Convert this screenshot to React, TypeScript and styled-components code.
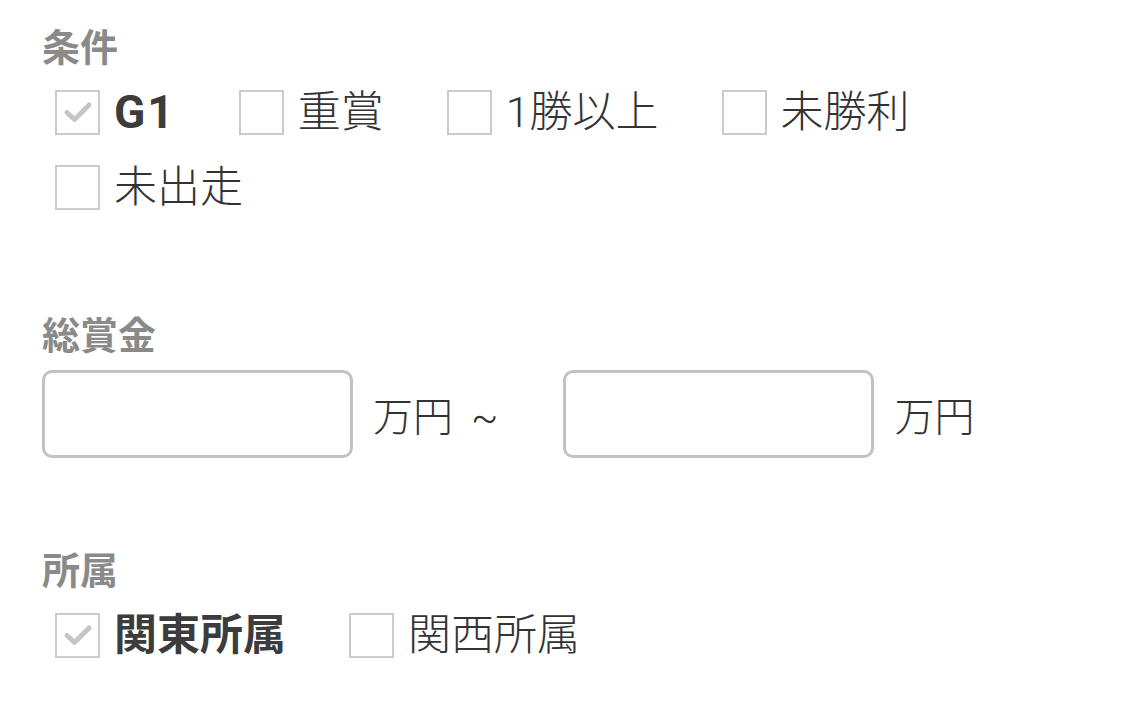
import React, { useState } from "react";
import styled, { createGlobalStyle } from "styled-components";

const GlobalStyle = createGlobalStyle`
    body {
        margin: 0;
        background: #ffffff;
        font-family: "Roboto", "Noto Sans CJK JP", sans-serif;
    }
`;

const Page = styled.div`
    width: 1125px;
    height: 704px;
    padding: 20px 0 0 42px;
    box-sizing: border-box;
    overflow: hidden;
`;

const Section = styled.section<{ $space: number }>`
    margin-bottom: ${(p) => p.$space}px;
`;

const Heading = styled.h3`
    margin: 0 0 12px;
    font-size: 38px;
    line-height: 50px;
    font-weight: 700;
    color: #8a8a8a;
    font-family: "Noto Sans CJK JP", sans-serif;
`;

const Options = styled.div`
    display: flex;
    flex-wrap: wrap;
    column-gap: 63px;
    row-gap: 15px;
    padding-left: 13px;
`;

const Option = styled.label`
    display: flex;
    align-items: center;
    height: 60px;
    gap: 14px;
    cursor: pointer;
`;

const Box = styled.span`
    width: 45px;
    height: 45px;
    box-sizing: border-box;
    border: 2px solid #cbcbcb;
    display: flex;
    align-items: center;
    justify-content: center;
    background: #fff;
`;

const Label = styled.span<{ $on: boolean }>`
    font-size: 43px;
    line-height: 60px;
    color: ${(p) => (p.$on ? "#3c3c3c" : "#333333")};
    font-weight: ${(p) => (p.$on ? 700 : 300)};
    font-family: "Roboto", "Noto Sans CJK JP", sans-serif;
`;

const Latin = styled.span`
    font-size: 46px;
    letter-spacing: 2px;
`;

const RangeRow = styled.div`
    display: flex;
    align-items: center;
`;

const Input = styled.input`
    width: 311px;
    height: 88px;
    box-sizing: border-box;
    border: 3px solid #c2c2c2;
    border-radius: 10px;
    outline: none;
    font-size: 36px;
    padding: 0 16px;
`;

const Unit = styled.span<{ $after?: number }>`
    margin-left: 20px;
    margin-right: ${(p) => p.$after ?? 0}px;
    font-size: 40px;
    font-weight: 300;
    color: #333;
    font-family: "Noto Sans CJK JP", sans-serif;
`;

const Tilde = styled.span`
    margin-left: 18px;
    font-family: "Roboto", sans-serif;
`;

const Check = () => (
    <svg width="30" height="24" viewBox="0 0 30 24">
        <path d="M4 12.5 L11.5 19.5 L26 5" fill="none" stroke="#c6c6c6" strokeWidth="5" strokeLinecap="round" strokeLinejoin="round" />
    </svg>
);

type Item = { id: string; text: string; on: boolean };

const CheckGroup = ({ items }: { items: Item[] }) => {
    const [state, setState] = useState(items);
    return (
        <Options>
            {state.map((it, i) => (
                <Option
                    key={it.id}
                    onClick={() => setState(state.map((s, j) => (j === i ? { ...s, on: !s.on } : s)))}
                >
                    <Box>{it.on && <Check />}</Box>
                    <Label $on={it.on}>
                        {/^[A-Za-z0-9]+$/.test(it.text) ? <Latin>{it.text}</Latin> : it.text}
                    </Label>
                </Option>
            ))}
        </Options>
    );
};

const App = () => {
    return (
        <Page>
            <GlobalStyle />
            <Section $space={91}>
                <Heading>条件</Heading>
                <CheckGroup
                    items={[
                        { id: "g1", text: "G1", on: true },
                        { id: "jusho", text: "重賞", on: false },
                        { id: "win1", text: "1勝以上", on: false },
                        { id: "maiden", text: "未勝利", on: false },
                        { id: "unraced", text: "未出走", on: false },
                    ]}
                />
            </Section>
            <Section $space={85}>
                <Heading>総賞金</Heading>
                <RangeRow>
                    <Input />
                    <Unit $after={65}>
                        万円<Tilde>~</Tilde>
                    </Unit>
                    <Input />
                    <Unit>万円</Unit>
                </RangeRow>
            </Section>
            <Section $space={0}>
                <Heading>所属</Heading>
                <CheckGroup
                    items={[
                        { id: "east", text: "関東所属", on: true },
                        { id: "west", text: "関西所属", on: false },
                    ]}
                />
            </Section>
        </Page>
    );
};

export default App;
